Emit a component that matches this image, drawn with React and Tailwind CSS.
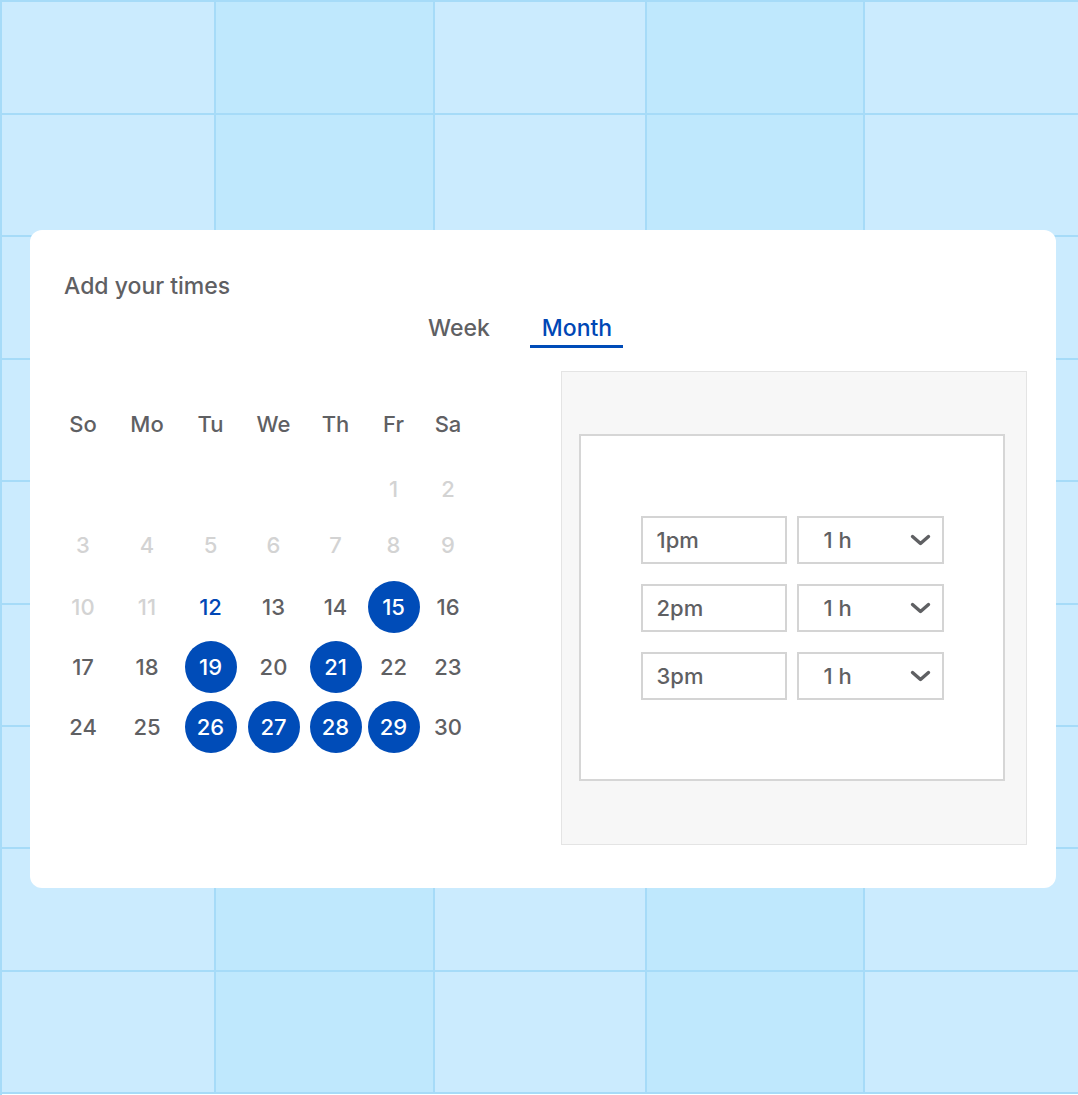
import React from 'react';

const COLS = [214, 219, 212, 218, 215];
const ROWS = 9;

const WEEKDAYS = ['So', 'Mo', 'Tu', 'We', 'Th', 'Fr', 'Sa'];

// state: d = disabled, t = today, s = selected, n = normal
const WEEKS = [
  { h: 'h-[56px]', days: [null, null, null, null, null, ['1', 'd'], ['2', 'd']] },
  { h: 'h-[56px]', days: [['3', 'd'], ['4', 'd'], ['5', 'd'], ['6', 'd'], ['7', 'd'], ['8', 'd'], ['9', 'd']] },
  { h: 'h-[60px] mt-[4px]', days: [['10', 'd'], ['11', 'd'], ['12', 't'], ['13', 'n'], ['14', 'n'], ['15', 's'], ['16', 'n']] },
  { h: 'h-[60px]', days: [['17', 'n'], ['18', 'n'], ['19', 's'], ['20', 'n'], ['21', 's'], ['22', 'n'], ['23', 'n']] },
  { h: 'h-[60px]', days: [['24', 'n'], ['25', 'n'], ['26', 's'], ['27', 's'], ['28', 's'], ['29', 's'], ['30', 'n']] },
];

const TIMES = ['1pm', '2pm', '3pm'];

function BackgroundGrid() {
  const cells = [];
  for (let r = 0; r < ROWS; r++) {
    COLS.forEach((_, c) => {
      cells.push(
        <div
          key={`${r}-${c}`}
          className={`border-r-2 border-b-2 border-[#a6dbf8] ${c % 2 === 1 ? 'bg-[#bfe8fd]' : 'bg-[#cbebfe]'}`}
        />
      );
    });
  }
  return (
    <div className="absolute inset-0 grid grid-cols-[214px_219px_212px_218px_215px] grid-rows-[113px_repeat(8,122.4px)] border-l-2 border-t-2 border-[#a6dbf8]">
      {cells}
    </div>
  );
}

function DayCell({ day }) {
  if (!day) return <div />;
  const [label, state] = day;
  if (state === 's') {
    return (
      <div className="flex items-center justify-center">
        <span className="w-[52px] h-[52px] rounded-full bg-[#004cb8] text-white flex items-center justify-center">
          {label}
        </span>
      </div>
    );
  }
  const color = state === 'd' ? 'text-[#d3d3d3]' : state === 't' ? 'text-[#0047b5]' : 'text-[#5f6063]';
  return <div className={`flex items-center justify-center ${color}`}>{label}</div>;
}

function Calendar() {
  const cols = 'grid grid-cols-[64px_64px_63px_63px_61px_55px_54px]';
  return (
    <div className="w-[424px] pt-[33px] text-[22px] leading-[28px] font-medium">
      <div className={`${cols} h-[40px] text-[#5f6063]`}>
        {WEEKDAYS.map((d) => (
          <div key={d} className="flex items-center justify-center">{d}</div>
        ))}
      </div>
      <div className="mt-[17px]">
        {WEEKS.map((w, i) => (
          <div key={i} className={`${cols} ${w.h}`}>
            {w.days.map((d, j) => (
              <DayCell key={j} day={d} />
            ))}
          </div>
        ))}
      </div>
    </div>
  );
}

function Chevron() {
  return (
    <svg width="21" height="12" viewBox="0 0 21 12" fill="none">
      <path d="M2.5 2.5 L10.5 9.5 L18.5 2.5" stroke="#5f6063" strokeWidth="3.4" strokeLinecap="round" strokeLinejoin="round" />
    </svg>
  );
}

function TimeRow({ time }) {
  return (
    <div className="flex gap-[10px]">
      <div className="w-[146px] h-[48px] border-2 border-[#d4d4d4] bg-white flex items-center pl-[14px] text-[#5f6063]">
        {time}
      </div>
      <div className="w-[147px] h-[48px] border-2 border-[#d4d4d4] bg-white flex items-center justify-between pl-[25px] pr-[11px] text-[#5f6063]">
        <span>1 h</span>
        <Chevron />
      </div>
    </div>
  );
}

function TimesPanel() {
  return (
    <div className="ml-[86px] w-[466px] h-[474px] border border-[#e4e4e4] bg-[#f7f7f7] pt-[62px] pl-[17px]">
      <div className="w-[426px] h-[347px] border-2 border-[#d6d6d6] bg-white flex flex-col items-center justify-center gap-[20px] text-[22px] leading-[28px] font-medium">
        {TIMES.map((t) => (
          <TimeRow key={t} time={t} />
        ))}
      </div>
    </div>
  );
}

export default function App() {
  return (
    <div
      className="relative w-[1078px] h-[1095px] overflow-hidden"
      style={{ fontFamily: 'Inter, "Noto Sans", sans-serif' }}
    >
      <BackgroundGrid />
      <div className="relative pt-[230px] pl-[30px]">
        <div className="w-[1026px] h-[658px] bg-white rounded-[12px] pt-[42px]">
          <h1 className="pl-[34px] text-[23px] leading-[28px] text-[#5f6063] font-medium">Add your times</h1>
          <div className="mt-[14px] pl-[386px] flex gap-[28px] text-[23px] leading-[28px] font-medium">
            <div className="px-[12px] pb-[3px] border-b-[3px] border-transparent text-[#5f6063]">Week</div>
            <div className="pl-[12px] pr-[11px] pb-[3px] border-b-[3px] border-[#004cb8] text-[#0047b5]">Month</div>
          </div>
          <div className="mt-[23px] pl-[21px] flex items-start">
            <Calendar />
            <TimesPanel />
          </div>
        </div>
      </div>
    </div>
  );
}
